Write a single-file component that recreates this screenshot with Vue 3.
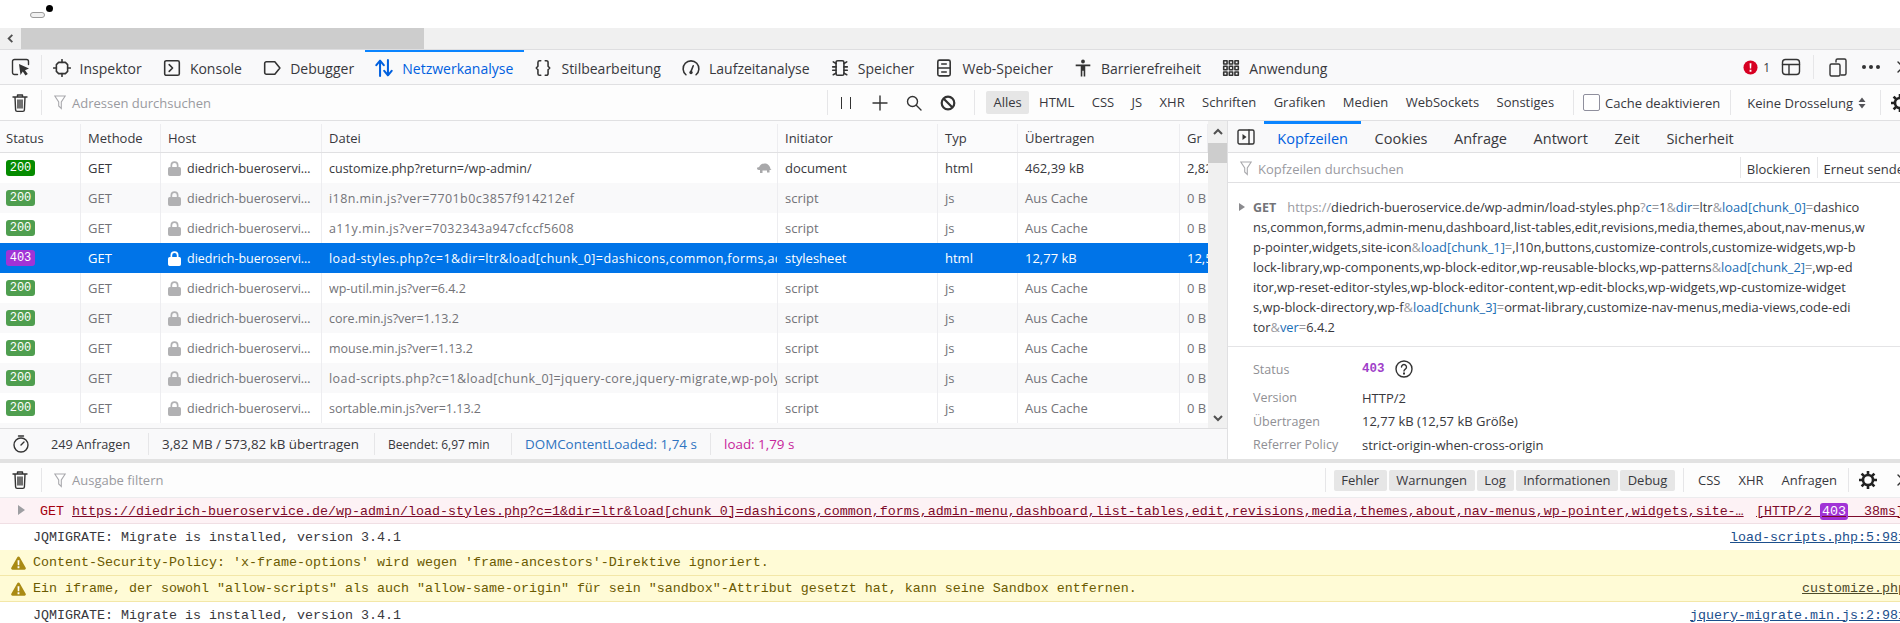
<template>
  <div class="devtools">
    <div class="page-top">
      <span class="pill"></span>
      <span class="dot"></span>
    </div>
    <div class="hscroll">
      <svg class="hscroll-arrow" viewBox="0 0 8 12"><path d="M6 2L2 6l4 4" /></svg>
      <div class="hscroll-thumb"></div>
    </div>

    <!-- Werkzeugleiste oben -->
    <div class="tabbar">
      <button class="pick">
        <svg viewBox="0 0 20 20" class="ico20">
          <path d="M6.500 17.500H3.500a2 2 0 0 1-2-2v-11a2 2 0 0 1 2-2h12a2 2 0 0 1 2 2v3" class="st" />
          <path d="M8 7l10 4.500-4 1.700 2.800 3.800-2.400 1.600-2.600-4L9.500 18z" class="fl" />
        </svg>
      </button>
      <span class="sep"></span>
      <div v-for="tab in tabs" :key="tab.label" class="tab" :class="{ active: tab.active }">
        <span class="tab-icon">
          <svg viewBox="0 0 16 16">
            <path v-for="d in tab.paths" :key="d" :d="d" class="st" />
            <path v-for="d in tab.fills || []" :key="d" :d="d" class="fl" />
          </svg>
        </span>
        <span>{{ tab.label }}</span>
      </div>
      <div class="tabbar-right">
        <svg class="err-ico" viewBox="0 0 16 16">
          <circle cx="8" cy="8" r="7.500" fill="#d70022" />
          <path d="M7 3.500h2l-.3 5.500H7.300zM7 10.500h2v2H7z" fill="#fff" />
        </svg>
        <span class="err-count">1</span>
        <svg class="ico20 layout-ico" viewBox="0 0 20 20">
          <rect x="1.500" y="2.500" width="17" height="15" rx="3" class="st" />
          <path d="M1.500 7.500h17M8 7.500v10" class="st" />
        </svg>
        <span class="sep sep-tab"></span>
        <svg class="ico20 resp-ico" viewBox="0 0 20 20">
          <path d="M8 5V3.500a1.500 1.500 0 0 1 1.500-1.500h7A1.500 1.500 0 0 1 18 3.500v13a1.500 1.500 0 0 1-1.500 1.500H13" class="st" />
          <rect x="2" y="7" width="10" height="12" rx="1.500" class="st" />
        </svg>
        <span class="dots"><i></i><i></i><i></i></span>
        <svg class="close-ico" viewBox="0 0 12 12"><path d="M1 1l10 10M11 1L1 11" class="st" /></svg>
      </div>
    </div>

    <!-- Netzwerkanalyse -->
    <div class="toolbar">
      <svg class="trash" viewBox="0 0 16 20">
        <path d="M1 4h14M5.500 4V2h5v2M3 4l.6 13a1.500 1.500 0 0 0 1.500 1.400h5.800a1.500 1.500 0 0 0 1.500-1.400L13 4M6 7v8M8 7v8M10 7v8" class="st" />
      </svg>
      <span class="sep"></span>
      <svg class="funnel" viewBox="0 0 12 15"><path d="M.8 1h10.400L7.300 7v6.500L4.700 11V7z" /></svg>
      <span class="placeholder grow">Adressen durchsuchen</span>
      <span class="sep"></span>
      <span class="tool-icons">
        <svg viewBox="0 0 16 16"><path d="M3.500 2v12M12.500 2v12" class="thin" /></svg>
        <svg viewBox="0 0 16 16"><path d="M8 1v14M1 8h14" class="st" /></svg>
        <svg viewBox="0 0 16 16"><path d="M6.500 1.500a5 5 0 1 1 0 10 5 5 0 0 1 0-10zM10 10l5 5" class="st" /></svg>
        <svg viewBox="0 0 16 16"><circle cx="8" cy="8" r="6.300" class="bold" /><path d="M3.500 3.500l9 9" class="bold" /></svg>
      </span>
      <span class="sep"></span>
      <div class="type-filters">
        <span v-for="f in typeFilters" :key="f" class="type-btn" :class="{ on: f === 'Alles' }">{{ f }}</span>
      </div>
      <span class="sep"></span>
      <label class="cache">
        <span class="checkbox"></span>
        Cache deaktivieren
      </label>
      <span class="sep"></span>
      <span class="throttle">Keine Drosselung
        <svg viewBox="0 0 8 12"><path d="M4 .5L7.500 5H.5zM4 11.500L.5 7h7z" /></svg>
      </span>
      <span class="sep"></span>
      <svg class="gear" viewBox="0 0 20 20">
        <circle cx="10" cy="10" r="5" class="gear-ring" />
        <path d="M10 1v4M10 15v4M1 10h4M15 10h4M3.600 3.600l2.900 2.900M13.500 13.500l2.900 2.900M16.400 3.600l-2.900 2.900M6.500 13.500l-2.900 2.900" class="gear-ring" />
      </svg>
    </div>

    <div class="split">
      <div class="left">
        <div class="table-wrap">
          <div class="table">
            <div class="row head">
              <div v-for="c in columns" :key="c" class="cell">{{ c }}</div>
            </div>
            <div
              v-for="(r, i) in rows"
              :key="i"
              class="row"
              :class="{ odd: i % 2 === 1, selected: r.selected, cached: r.transferred === 'Aus Cache' }"
            >
              <div class="cell"><span class="badge" :class="{ forbidden: r.status === 403, fresh: i === 0 }">{{ r.status }}</span></div>
              <div class="cell">GET</div>
              <div class="cell host">
                <svg class="lock" viewBox="0 0 13 15"><path d="M2.500 6V4.200a4 4 0 0 1 8 0V6h.8A1.700 1.700 0 0 1 13 7.700v5.600a1.700 1.700 0 0 1-1.700 1.700H1.700A1.700 1.700 0 0 1 0 13.300V7.700A1.700 1.700 0 0 1 1.700 6zM4.200 6h4.600V4.200a2.300 2.300 0 0 0-4.600 0z" /></svg>
                <span class="host-name">diedrich-bueroservice.de</span>
              </div>
              <div class="cell file">
                <span class="file-name" :class="{ spaced: r.spaced }">{{ r.file }}</span>
                <svg v-if="i === 0" class="turtle" viewBox="0 0 16 10">
                  <path d="M1 5.500c0-1 1-1.500 2-1.200C4 1.800 6 .5 8.500.5c3 0 5.500 2 6 5.500l1 1h-2v2.500h-2.500V7.500H6.500v2.500H4V7C2.500 7 1 6.800 1 5.500z" />
                </svg>
              </div>
              <div class="cell">{{ r.initiator }}</div>
              <div class="cell">{{ r.type }}</div>
              <div class="cell">{{ r.transferred }}</div>
              <div class="cell last">{{ r.size }}</div>
            </div>
          </div>
          <div class="vscroll">
            <svg viewBox="0 0 12 8"><path d="M2 6l4-4 4 4" /></svg>
            <div class="vscroll-thumb"></div>
            <svg class="down" viewBox="0 0 12 8"><path d="M2 2l4 4 4-4" /></svg>
          </div>
        </div>
        <div class="statusbar">
          <svg class="watch" viewBox="0 0 18 18">
            <circle cx="9" cy="10" r="7" class="st" />
            <path d="M6.500 1h5M9 10l3-3" class="st" />
          </svg>
          <span class="s-count">249 Anfragen</span>
          <span class="sep"></span>
          <span class="s-size">3,82 MB / 573,82 kB übertragen</span>
          <span class="sep"></span>
          <span class="s-time">Beendet: 6,97 min</span>
          <span class="sep"></span>
          <span class="s-dcl">DOMContentLoaded: 1,74 s</span>
          <span class="sep"></span>
          <span class="s-load">load: 1,79 s</span>
        </div>
      </div>

      <div class="side">
        <div class="side-tabs">
          <svg class="side-toggle" viewBox="0 0 18 16">
            <rect x="1" y="1" width="16" height="14" rx="1.500" class="st" />
            <path d="M12 1v14" class="st" />
            <path d="M5.500 5l4 3-4 3z" class="fl" />
          </svg>
          <span v-for="t in sideTabs" :key="t" class="side-tab" :class="{ active: t === 'Kopfzeilen' }">{{ t }}</span>
        </div>
        <div class="side-filter">
          <svg class="funnel" viewBox="0 0 12 15"><path d="M.8 1h10.400L7.300 7v6.500L4.700 11V7z" /></svg>
          <span class="placeholder grow">Kopfzeilen durchsuchen</span>
          <span class="sep"></span>
          <span class="side-action">Blockieren</span>
          <span class="sep"></span>
          <span class="side-action resend">Erneut senden</span>
        </div>
        <div class="url-block">
          <span class="url-arrow"></span>
          <div class="url-line"><b class="method">GET</b><span class="dim url-proto">https://</span>diedrich-bueroservice.de/wp-admin/load-styles.php<span class="dim">?</span><span class="key">c</span><span class="dim">=</span>1<span class="dim">&amp;</span><span class="key">dir</span><span class="dim">=</span>ltr<span class="dim">&amp;</span><span class="key">load[chunk_0]</span><span class="dim">=</span>dashico</div>
          <div class="url-line">ns,common,forms,admin-menu,dashboard,list-tables,edit,revisions,media,themes,about,nav-menus,w</div>
          <div class="url-line">p-pointer,widgets,site-icon<span class="dim">&amp;</span><span class="key">load[chunk_1]</span><span class="dim">=</span>,l10n,buttons,customize-controls,customize-widgets,wp-b</div>
          <div class="url-line">lock-library,wp-components,wp-block-editor,wp-reusable-blocks,wp-patterns<span class="dim">&amp;</span><span class="key">load[chunk_2]</span><span class="dim">=</span>,wp-ed</div>
          <div class="url-line">itor,wp-reset-editor-styles,wp-block-editor-content,wp-edit-blocks,wp-widgets,wp-customize-widget</div>
          <div class="url-line">s,wp-block-directory,wp-f<span class="dim">&amp;</span><span class="key">load[chunk_3]</span><span class="dim">=</span>ormat-library,customize-nav-menus,media-views,code-edi</div>
          <div class="url-line">tor<span class="dim">&amp;</span><span class="key">ver</span><span class="dim">=</span>6.4.2</div>
        </div>
        <div class="facts">
          <div class="fact first">
            <span class="fact-key">Status</span>
            <span class="fact-val"><span class="mono-status">403</span>
              <svg class="help" viewBox="0 0 18 18">
                <circle cx="9" cy="9" r="8" class="st" />
                <path d="M6.500 7a2.500 2.500 0 1 1 3.800 2.100C9.400 9.700 9 10.200 9 11" class="st" />
                <path d="M8 12.500h2v2H8z" class="fl" />
              </svg>
            </span>
          </div>
          <div class="fact"><span class="fact-key">Version</span><span class="fact-val">HTTP/2</span></div>
          <div class="fact"><span class="fact-key">Übertragen</span><span class="fact-val">12,77 kB (12,57 kB Größe)</span></div>
          <div class="fact"><span class="fact-key">Referrer Policy</span><span class="fact-val">strict-origin-when-cross-origin</span></div>
        </div>
      </div>
    </div>

    <div class="splitter"></div>

    <!-- Konsole -->
    <div class="toolbar console-bar">
      <svg class="trash" viewBox="0 0 16 20">
        <path d="M1 4h14M5.500 4V2h5v2M3 4l.6 13a1.500 1.500 0 0 0 1.500 1.400h5.800a1.500 1.500 0 0 0 1.500-1.400L13 4M6 7v8M8 7v8M10 7v8" class="st" />
      </svg>
      <span class="sep"></span>
      <svg class="funnel" viewBox="0 0 12 15"><path d="M.8 1h10.400L7.300 7v6.500L4.700 11V7z" /></svg>
      <span class="placeholder grow">Ausgabe filtern</span>
      <span class="sep"></span>
      <div class="levels">
        <span v-for="l in levels" :key="l" class="level">{{ l }}</span>
      </div>
      <span class="sep"></span>
      <div class="net-levels">
        <span v-for="l in netLevels" :key="l">{{ l }}</span>
      </div>
      <span class="sep"></span>
      <svg class="gear console-gear" viewBox="0 0 20 20">
        <circle cx="10" cy="10" r="5" class="gear-ring" />
        <path d="M10 1v4M10 15v4M1 10h4M15 10h4M3.600 3.600l2.900 2.900M13.500 13.500l2.900 2.900M16.400 3.600l-2.900 2.900M6.500 13.500l-2.900 2.900" class="gear-ring" />
      </svg>
      <svg class="close-ico" viewBox="0 0 12 12"><path d="M1 1l10 10M11 1L1 11" class="st" /></svg>
    </div>
    <div class="log error">
      <span class="log-arrow"></span>
      <span class="log-text">GET <a>{{ errorUrl }}</a></span>
      <span class="http">[HTTP/2 <b>403</b> &nbsp;38ms]</span>
    </div>
    <div v-for="(m, i) in messages" :key="i" class="log" :class="{ warn: m.warn }">
      <svg v-if="m.warn" class="warn-ico" viewBox="0 0 16 15">
        <path d="M8 .5a1.500 1.500 0 0 1 1.300.8l6.400 11.200a1.500 1.500 0 0 1-1.300 2.200H1.600a1.500 1.500 0 0 1-1.300-2.200L6.700 1.300A1.500 1.500 0 0 1 8 .5z" fill="#a98a14" />
        <path d="M7 4.500h2l-.2 5.500H7.200zM7 11h2v2H7z" fill="#fff" />
      </svg>
      <span class="log-text msg">{{ m.text }}</span>
      <a class="source">{{ m.source }}</a>
    </div>
  </div>
</template>

<script setup>
const tabs = [
  { label: 'Inspektor', paths: ['M5 3h6l2 2v6l-2 2H5l-2-2V5z', 'M8 .5V3M8 13v2.500M.5 8H3M13 8h2.500'] },
  { label: 'Konsole', paths: ['M3 1.500h10A1.500 1.500 0 0 1 14.500 3v10a1.500 1.500 0 0 1-1.500 1.500H3A1.500 1.500 0 0 1 1.500 13V3A1.500 1.500 0 0 1 3 1.500z', 'M5.500 5L8.500 8l-3 3'] },
  { label: 'Debugger', paths: ['M3 2.500h7.500L15 8l-4.500 5.500H3A1.500 1.500 0 0 1 1.500 12V4A1.500 1.500 0 0 1 3 2.500z'] },
  { label: 'Netzwerkanalyse', active: true, paths: ['M4.500 15V1.500M1.200 5.500l3.300-4 3.300 4', 'M11.500 1v13.500M8.200 10.500l3.300 4 3.300-4'] },
  { label: 'Stilbearbeitung', paths: ['M6 1.500H5a1.500 1.500 0 0 0-1.500 1.500v3.500L2 8l1.500 1.500V13A1.500 1.500 0 0 0 5 14.500h1', 'M10 1.500h1A1.500 1.500 0 0 1 12.500 3v3.500L14 8l-1.500 1.500V13a1.500 1.500 0 0 1-1.500 1.500h-1'] },
  { label: 'Laufzeitanalyse', paths: ['M3.500 14A7 7 0 1 1 12.500 14', 'M8 11l2-5'], fills: ['M6.500 12a1.500 1.500 0 1 0 3 0 1.500 1.500 0 0 0-3 0z'] },
  { label: 'Speicher', paths: ['M6 1.500h4a1.500 1.500 0 0 1 1.500 1.500v10a1.500 1.500 0 0 1-1.500 1.500H6A1.500 1.500 0 0 1 4.500 13V3A1.500 1.500 0 0 1 6 1.500z', 'M4.500 4L2 2.500M4.500 7H1.500M4.500 10H1.500M4.500 12.500L2 14M11.500 4L14 2.500M11.500 7h3M11.500 10h3M11.500 12.500L14 14'] },
  { label: 'Web-Speicher', paths: ['M4 1h8a1.500 1.500 0 0 1 1.500 1.500v11A1.500 1.500 0 0 1 12 15H4a1.500 1.500 0 0 1-1.500-1.500v-11A1.500 1.500 0 0 1 4 1z', 'M2.500 8h11M6 4.500h4M6 11.500h4'] },
  { label: 'Barrierefreiheit', paths: [], fills: ['M8 .5a1.700 1.700 0 1 1 0 3.400A1.700 1.700 0 0 1 8 .5zM1.500 4.800h13v1.700H10v9H8.600v-5H7.400v5H6v-9H1.500z'] },
  { label: 'Anwendung', paths: ['M1.500 1.500h3v3h-3zM6.500 1.500h3v3h-3zM11.500 1.500h3v3h-3zM1.500 6.500h3v3h-3zM6.500 6.500h3v3h-3zM11.500 6.500h3v3h-3zM1.500 11.500h3v3h-3zM6.500 11.500h3v3h-3zM11.500 11.500h3v3h-3z'] }
];

const typeFilters = ['Alles', 'HTML', 'CSS', 'JS', 'XHR', 'Schriften', 'Grafiken', 'Medien', 'WebSockets', 'Sonstiges'];
const columns = ['Status', 'Methode', 'Host', 'Datei', 'Initiator', 'Typ', 'Übertragen', 'Gr'];
const sideTabs = ['Kopfzeilen', 'Cookies', 'Anfrage', 'Antwort', 'Zeit', 'Sicherheit'];
const levels = ['Fehler', 'Warnungen', 'Log', 'Informationen', 'Debug'];
const netLevels = ['CSS', 'XHR', 'Anfragen'];

const cachedRow = (file, spaced = false) => ({
  status: 200,
  file,
  spaced,
  initiator: 'script',
  type: 'js',
  transferred: 'Aus Cache',
  size: '0 B'
});

const rows = [
  { status: 200, file: 'customize.php?return=/wp-admin/', initiator: 'document', type: 'html', transferred: '462,39 kB', size: '2,82 MB' },
  cachedRow('i18n.min.js?ver=7701b0c3857f914212ef', true),
  cachedRow('a11y.min.js?ver=7032343a947cfccf5608', true),
  { status: 403, selected: true, spaced: true, file: 'load-styles.php?c=1&dir=ltr&load[chunk_0]=dashicons,common,forms,admin-menu,dashboard', initiator: 'stylesheet', type: 'html', transferred: '12,77 kB', size: '12,57 kB' },
  cachedRow('wp-util.min.js?ver=6.4.2'),
  cachedRow('core.min.js?ver=1.13.2'),
  cachedRow('mouse.min.js?ver=1.13.2'),
  cachedRow('load-scripts.php?c=1&load[chunk_0]=jquery-core,jquery-migrate,wp-polyfill,underscore', true),
  cachedRow('sortable.min.js?ver=1.13.2')
];

const errorUrl = 'https://diedrich-bueroservice.de/wp-admin/load-styles.php?c=1&dir=ltr&load[chunk_0]=dashicons,common,forms,admin-menu,dashboard,list-tables,edit,revisions,media,themes,about,nav-menus,wp-pointer,widgets,site-…';

const messages = [
  { text: 'JQMIGRATE: Migrate is installed, version 3.4.1', source: 'load-scripts.php:5:981' },
  { text: "Content-Security-Policy: 'x-frame-options' wird wegen 'frame-ancestors'-Direktive ignoriert.", warn: true },
  { text: 'Ein iframe, der sowohl "allow-scripts" als auch "allow-same-origin" für sein "sandbox"-Attribut gesetzt hat, kann seine Sandbox entfernen.', source: 'customize.php', warn: true },
  { text: 'JQMIGRATE: Migrate is installed, version 3.4.1', source: 'jquery-migrate.min.js:2:981' }
];
</script>

<style>
html, body {
  margin: 0;
  height: 100%;
  overflow: hidden;
  background: #fff;
}
</style>

<style scoped>
.devtools {
  width: 1906px;
  height: 623px;
  overflow: hidden;
  font-family: "Open Sans", "Liberation Sans", sans-serif;
  font-size: 13px;
  color: #38383d;
}

.st { fill: none; stroke: #333; stroke-width: 1.4; stroke-linejoin: round; stroke-linecap: round; }
.fl { fill: #333; stroke: none; }
.thin { fill: none; stroke: #333; stroke-width: 1; }
.bold { fill: none; stroke: #333; stroke-width: 2.200; }
.ico20 { width: 20px; height: 20px; flex: none; }
.grow { flex: 1; }

.sep {
  flex: none;
  width: 1px;
  align-self: stretch;
  margin: 5px 0;
  background: #e6e6e8;
}

.page-top {
  height: 28px;
  padding: 5px 0 0 30px;
  box-sizing: border-box;
  display: flex;
  align-items: flex-start;
  gap: 1px;
}
.pill {
  width: 13px;
  height: 4px;
  margin-top: 7px;
  border: 1px solid #9a9a9a;
  border-radius: 3px;
  background: #f0f0f0;
}
.dot {
  width: 7px;
  height: 7px;
  border-radius: 50%;
  background: #000;
}

.hscroll {
  height: 21px;
  background: #f0f0f0;
  display: flex;
  align-items: stretch;
}
.hscroll-arrow {
  width: 21px;
  height: 21px;
  padding: 5px 6px;
  box-sizing: border-box;
  fill: none;
  stroke: #505050;
  stroke-width: 2;
}
.hscroll-thumb {
  width: 403px;
  background: #cdcdcd;
}

.tabbar {
  height: 36px;
  box-sizing: border-box;
  border-top: 1px solid #dedee0;
  border-bottom: 1px solid #e0e0e2;
  background: #f9f9fa;
  display: flex;
  align-items: stretch;
  font-size: 14px;
}
.pick {
  width: 41px;
  padding: 0;
  border: 0;
  background: none;
  display: flex;
  align-items: center;
  justify-content: center;
}
.tab {
  display: flex;
  align-items: center;
  gap: 9px;
  padding: 0 10.600px;
  border-top: 2px solid transparent;
  white-space: nowrap;
}
.tab.active {
  border-top-color: #0a84ff;
  color: #0060df;
}
.tab.active .st { stroke: #0060df; stroke-width: 1.800; }
.tab-icon {
  width: 18px;
  height: 18px;
  flex: none;
}
.tab-icon svg { display: block; width: 18px; height: 18px; }
.tabbar-right {
  margin-left: auto;
  display: flex;
  align-items: center;
}
.err-ico { width: 15px; height: 15px; }
.err-count { margin: 0 11px 0 5px; font-size: 12px; }
.layout-ico { margin-right: 12px; }
.sep-tab { margin-right: 14px; }
.resp-ico { margin-right: 14px; }
.dots { display: flex; gap: 3px; margin-right: 17px; }
.dots i { width: 4px; height: 4px; border-radius: 50%; background: #333; }
.close-ico { width: 12px; height: 12px; flex: none; margin-right: -3px; }

.toolbar {
  height: 36px;
  box-sizing: border-box;
  border-bottom: 1px solid #e0e0e2;
  display: flex;
  align-items: center;
  background: #fdfdfd;
}
.trash {
  flex: none;
  width: 16px;
  height: 20px;
  margin: 0 13px 0 12px;
}
.funnel {
  flex: none;
  width: 12px;
  height: 15px;
  margin: 0 6px 0 12px;
  fill: #fff;
  stroke: #a9a9ad;
  stroke-width: 1.100;
}
.placeholder { color: #9a9a9f; }
.tool-icons {
  display: flex;
  align-items: center;
  gap: 18px;
  padding: 0 18px 0 10px;
}
.tool-icons svg { width: 16px; height: 16px; display: block; }
.type-filters {
  display: flex;
  align-items: center;
  padding: 0 12px 0 11px;
  gap: 3.400px;
}
.type-btn {
  padding: 2px 7px 3px;
  border-radius: 2px;
}
.type-btn.on { background: #e6e6e6; }
.cache {
  display: flex;
  align-items: center;
  gap: 5px;
  padding: 0 10px 0 9px;
}
.checkbox {
  width: 15px;
  height: 15px;
  border: 1px solid #8f8f9d;
  border-radius: 2px;
  background: #fff;
}
.throttle {
  display: flex;
  align-items: center;
  gap: 5px;
  padding: 0 14px 0 16px;
}
.throttle svg { width: 8px; height: 12px; fill: #55555a; }
.gear { width: 20px; height: 20px; flex: none; margin: 0 -4px 0 9px; }
.gear-ring { fill: none; stroke: #222; stroke-width: 2.600; }

.split {
  height: 338px;
  display: flex;
}
.left {
  width: 1227px;
  flex: none;
  display: flex;
  flex-direction: column;
}
.table-wrap {
  height: 308px;
  display: flex;
  overflow: hidden;
  border-bottom: 1px solid #dedee0;
  box-sizing: border-box;
}
.table {
  width: 1208px;
  flex: none;
  background: #f9f9fa;
  overflow: hidden;
}
.row {
  display: grid;
  grid-template-columns: 81px 80px 161px 456px 160px 80px 162px 28px;
  height: 30px;
  background: #fff;
  color: #38383d;
}
.row.odd { background: #f9f9fa; }
.row.cached { color: #737378; }
.row.head {
  height: 32px;
  padding-top: 3px;
  background: #fbfbfc;
  border-bottom: 1px solid #e0e0e2;
  box-sizing: border-box;
  color: #38383d;
}
.row.selected { background: #0074e8; color: #fff; }
.cell {
  padding: 0 0 0 7px;
  border-right: 1px solid #ededf0;
  display: flex;
  align-items: center;
  overflow: hidden;
  white-space: nowrap;
  box-sizing: border-box;
}
.row.selected .cell { border-right-color: #0074e8; }
.cell.last { border-right: 0; }
.cell:first-child { padding-left: 6px; }
.badge {
  width: 29px;
  height: 16px;
  border-radius: 3px;
  background: #4f9e4f;
  color: #fff;
  font-family: "Liberation Mono", monospace;
  font-size: 12px;
  line-height: 16px;
  text-align: center;
}
.badge.fresh { background: #058b00; }
.badge.forbidden { background: #a133d6; }
.lock {
  flex: none;
  width: 13px;
  height: 15px;
  margin-right: 6px;
  fill: #b1b1b3;
}
.row.selected .lock { fill: #fff; }
.host { font-size: 12.500px; }
.host-name {
  overflow: hidden;
  text-overflow: ellipsis;
  padding-right: 7px;
}
.file { justify-content: space-between; font-size: 12.500px; }
.file-name { overflow: hidden; }
.file-name.spaced { letter-spacing: .42px; }
.turtle {
  flex: none;
  width: 16px;
  height: 10px;
  margin: 0 5px 0 4px;
  fill: #a8a8aa;
}
.vscroll {
  width: 19px;
  flex: none;
  background: #f0f0f0;
  display: flex;
  flex-direction: column;
  align-items: center;
}
.vscroll svg {
  flex: none;
  width: 12px;
  height: 8px;
  margin-top: 7px;
  fill: none;
  stroke: #505050;
  stroke-width: 2;
}
.vscroll svg.down { margin-top: auto; margin-bottom: 6px; }
.vscroll-thumb {
  width: 19px;
  height: 20px;
  margin-top: 7px;
  background: #cdcdcd;
}
.statusbar {
  flex: 1;
  display: flex;
  align-items: center;
  gap: 13px;
  background: #f9f9fa;
  padding-left: 12px;
  white-space: nowrap;
}
.statusbar .sep { margin: 4px 0; }
.watch { width: 18px; height: 18px; margin-right: 8px; flex: none; }
.s-count { width: 84px; font-size: 12.700px; }
.s-size { width: 199px; font-size: 13.400px; }
.s-time { width: 110px; font-size: 12px; }
.s-dcl { width: 172px; font-size: 13.400px; color: #2f74c0; }
.s-load { font-size: 13.400px; color: #c7259b; }

.side {
  flex: 1;
  min-width: 0;
  border-left: 1px solid #e0e0e2;
  overflow: hidden;
}
.side-tabs {
  height: 32px;
  box-sizing: border-box;
  background: #f9f9fa;
  border-bottom: 1px solid #e0e0e2;
  display: flex;
  align-items: stretch;
  font-size: 14.500px;
}
.side-toggle {
  width: 18px;
  height: 16px;
  align-self: center;
  margin: 0 9px 0 9px;
  flex: none;
}
.side-tab {
  display: flex;
  align-items: center;
  padding: 0 13.300px;
  border-top: 3px solid transparent;
  box-sizing: border-box;
}
.side-tab.active {
  border-top-color: #0a84ff;
  color: #0060df;
}
.side-filter {
  height: 30px;
  box-sizing: border-box;
  padding-top: 2px;
  border-bottom: 1px solid #e0e0e2;
  display: flex;
  align-items: center;
}
.side-filter .sep { margin: 2px 0 4px; }
.side-action { padding: 0 6px; white-space: nowrap; }
.resend { margin-right: -12px; }
.url-block {
  position: relative;
  height: 164px;
  box-sizing: border-box;
  padding: 14px 0 0 25px;
  border-bottom: 1px solid #e4e4e6;
  font-size: 12.850px;
  line-height: 20px;
  white-space: nowrap;
  color: #38383d;
}
.url-arrow {
  position: absolute;
  left: 11px;
  top: 20px;
  border-left: 6px solid #8a8a8e;
  border-top: 4px solid transparent;
  border-bottom: 4px solid transparent;
}
.url-line { height: 20px; }
.method { color: #737378; font-weight: 700; margin-right: 11px; font-size: 12.500px; }
.dim { color: #9a9a9f; }
.key { color: #1a6eb5; }
.facts { padding: 8px 0 0 25px; }
.fact {
  display: flex;
  height: 23.500px;
  align-items: center;
}
.fact.first {
  height: 28px;
  margin-bottom: 3px;
}
.fact-key { width: 109px; color: #8f8f94; font-size: 12.500px; }
.fact-val { display: flex; align-items: center; }
.mono-status {
  font-family: "Liberation Mono", monospace;
  font-weight: 700;
  color: #9f3fc9;
  font-size: 12.500px;
}
.help { width: 18px; height: 18px; margin-left: 10px; }

.splitter {
  height: 4px;
  background: #e2e2e2;
}

.console-bar { height: 35px; border-bottom: 1px solid #ececee; }
.levels {
  display: flex;
  gap: 2px;
  padding: 0 8px;
}
.level {
  padding: 1px 7.600px 2px;
  border-radius: 2px;
  background: #e6e6e6;
}
.net-levels {
  display: flex;
  gap: 18px;
  padding: 0 11px 0 14px;
}
.console-gear { margin: 0 19px 0 9px; }

.log {
  display: flex;
  align-items: center;
  height: 26px;
  box-sizing: border-box;
  padding-left: 33px;
  font-family: "Liberation Mono", monospace;
  font-size: 13.330px;
  color: #38383d;
  white-space: nowrap;
  position: relative;
}
.log-text { flex: 1; min-width: 0; }
.source {
  color: #1c4f8c;
  text-decoration: underline;
}
.log.error {
  background: #fdf2f5;
  border-bottom: 1px solid #f0dfe4;
  color: #a4000f;
  padding: 1px 2px 0 40px;
}
.log.error a { color: #7d0a2a; text-decoration: underline; }
.log-arrow {
  position: absolute;
  left: 18px;
  top: 7px;
  border-left: 7px solid #9e9ea2;
  border-top: 5px solid transparent;
  border-bottom: 5px solid transparent;
}
.http { text-decoration: underline; color: #7d0a2a; }
.http b {
  font-weight: 400;
  color: #fff;
  background: #a133d6;
  border-radius: 3px;
  padding: 1px 2px;
}
.log.warn {
  background: #fffbd6;
  border-bottom: 1px solid #f3e7a8;
  color: #6b5a00;
}
.log.warn .source { color: #4e4a2a; }
.warn-ico {
  position: absolute;
  left: 11px;
  top: 6px;
  width: 15px;
  height: 14px;
}
</style>
